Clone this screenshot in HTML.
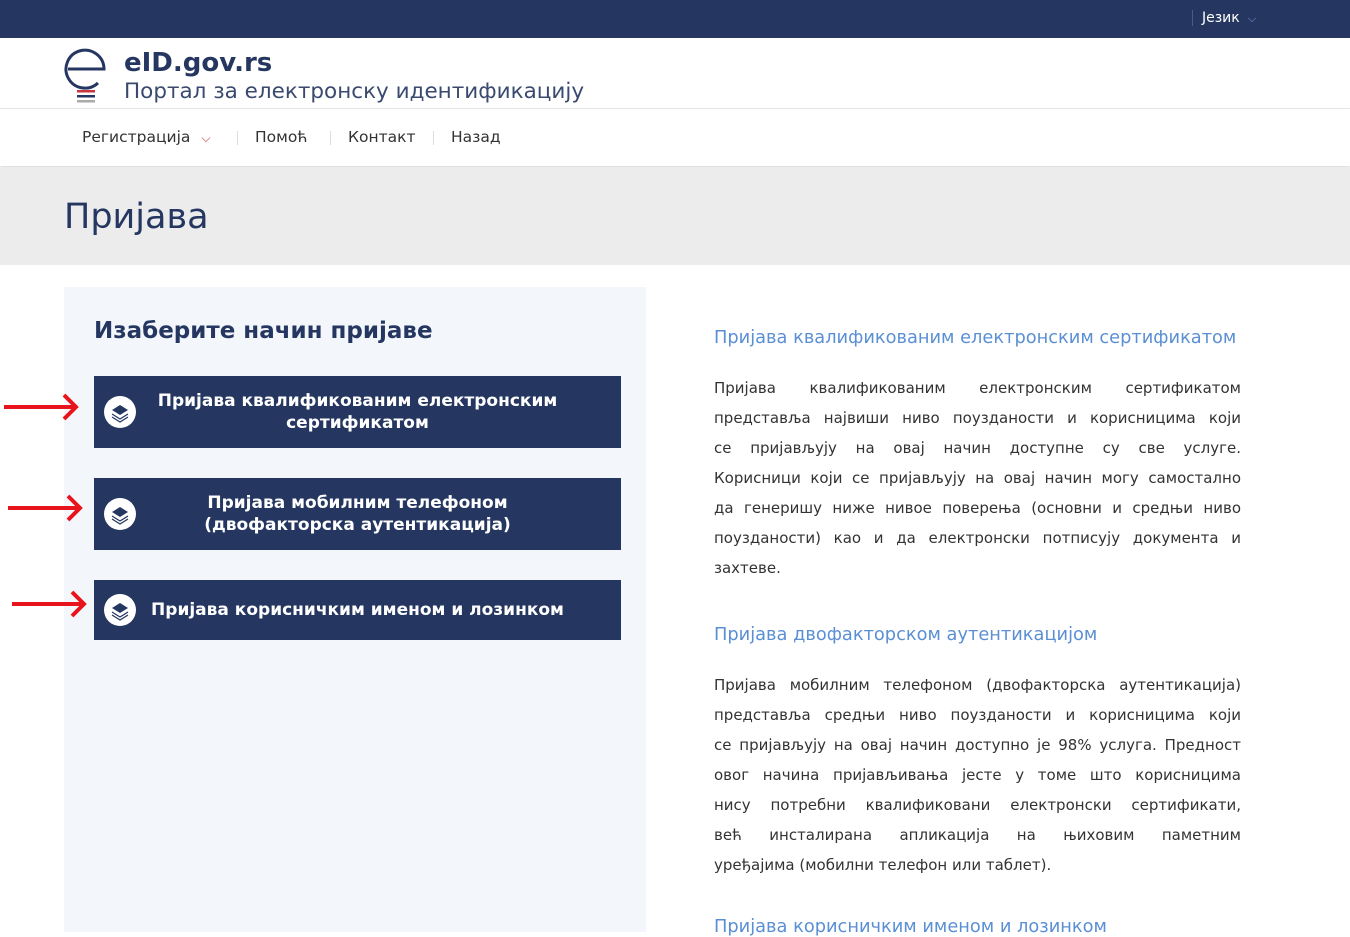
<!DOCTYPE html>
<html><head><meta charset="utf-8"><style>
body{margin:0;width:1350px;height:932px;overflow:hidden;background:#fff;font-family:"DejaVu Sans","Liberation Sans",sans-serif;color:#253761;position:relative}
.top{height:38px;background:#253761;position:relative}
.top span{position:absolute;left:1192px;top:10px;color:#fff;font-size:14px;border-left:1px solid #4a5b84;padding-left:9px}
.top span i{font-style:normal;color:#7f9be0;font-size:11px;margin-left:8px}
.hdr{height:70px;position:relative;border-bottom:1px solid #e6e6e6}
.t1{position:absolute;left:124px;font-size:26px;font-weight:bold}
.t2{position:absolute;left:124px;font-size:21.5px;color:#3a4a6e}
.nav{height:57px;position:relative;box-shadow:0 2px 3px rgba(0,0,0,.15);font-size:15.5px;color:#333}
.nav span{position:absolute;top:19px}
.sep{position:absolute;top:22px;width:1px;height:14px;background:#ddd}
.band{height:98px;background:#ececec;margin-top:1px;position:relative}
.left{position:absolute;left:64px;top:287px;width:582px;height:645px;background:#f3f7fc}
.left h2{position:absolute;left:30px;top:31px;margin:0;font-size:23px;font-weight:bold}
.btn{position:absolute;left:30px;width:527px;background:#253761;color:#fff;font-weight:bold;font-size:17px;text-align:center;display:flex;align-items:center;justify-content:center;line-height:22px}
.ic{position:absolute;left:10px;top:50%;margin-top:-16px;width:32px;height:32px;border-radius:50%;background:#fff}
.right{position:absolute;left:714px;width:527px}
.h{color:#5b8fd4;font-size:17.8px;position:absolute;left:0;white-space:nowrap}
.p{font-size:15px;line-height:30px;color:#333;position:absolute;left:0;width:527px}
.p div{text-align:justify;text-align-last:justify;white-space:nowrap}
.p div:last-child{text-align-last:left}
.arr{position:absolute}
</style></head><body>
<div class="top"><span>Језик<i>⌵</i></span></div>
<div class="hdr">
<svg style="position:absolute;left:64px;top:10px" width="46" height="58" viewBox="0 0 46 58"><path d="M4 21 H40 A19 19 0 1 0 34 35" fill="none" stroke="#253761" stroke-width="3"/><rect x="13" y="42" width="18" height="2.5" fill="#c6363c"/><rect x="13" y="47" width="18" height="2.5" fill="#253761"/><rect x="13" y="52" width="18" height="2.5" fill="#aaa"/></svg>
<div class="t1" style="top:10px">eID.gov.rs</div><div class="t2" style="top:41px">Портал за електронску идентификацију</div></div>
<div class="nav"><span style="left:82px">Регистрација <b style="color:#c6363c;font-weight:normal;margin-left:6px;font-size:12px">⌵</b></span><div class="sep" style="left:237px"></div><span style="left:255px">Помоћ</span><div class="sep" style="left:330px"></div><span style="left:348px">Контакт</span><div class="sep" style="left:433px"></div><span style="left:451px">Назад</span></div>
<div class="band"><h1 style="position:absolute;left:64px;top:30px;margin:0;font-size:35px;font-weight:normal">Пријава</h1></div>
<div class="left"><h2>Изаберите начин пријаве</h2>
<div class="btn" style="top:89px;height:72px"><div class="ic"><svg width="32" height="32"><path d="M8 14l8-5 8 5-8 5z" fill="#253761"/><path d="M8 18l8 5 8-5M8 21l8 5 8-5" fill="none" stroke="#253761" stroke-width="1.2"/></svg></div>Пријава квалификованим електронским<br>сертификатом</div>
<div class="btn" style="top:191px;height:72px"><div class="ic"><svg width="32" height="32"><path d="M8 14l8-5 8 5-8 5z" fill="#253761"/><path d="M8 18l8 5 8-5M8 21l8 5 8-5" fill="none" stroke="#253761" stroke-width="1.2"/></svg></div>Пријава мобилним телефоном<br>(двофакторска аутентикација)</div>
<div class="btn" style="top:293px;height:60px"><div class="ic"><svg width="32" height="32"><path d="M8 14l8-5 8 5-8 5z" fill="#253761"/><path d="M8 18l8 5 8-5M8 21l8 5 8-5" fill="none" stroke="#253761" stroke-width="1.2"/></svg></div>Пријава корисничким именом и лозинком</div>
</div>
<svg class="arr" style="left:0;top:390px" width="90" height="230"><g stroke="#e8141b" stroke-width="4" fill="none"><path d="M4 17H76M64 5l12 12-12 12"/><path d="M8 118H80M68 106l12 12-12 12"/><path d="M12 214H84M72 202l12 12-12 12"/></g></svg>
<div class="right" style="top:0">
<div class="h" style="top:327px">Пријава квалификованим електронским сертификатом</div>
<div class="p" style="top:373px"><div>Пријава квалификованим електронским сертификатом</div><div>представља највиши ниво поузданости и корисницима који</div><div>се пријављују на овај начин доступне су све услуге.</div><div>Корисници који се пријављују на овај начин могу самостално</div><div>да генеришу ниже нивое поверења (основни и средњи ниво</div><div>поузданости) као и да електронски потписују документа и</div><div>захтеве.</div></div>
<div class="h" style="top:624px">Пријава двофакторском аутентикацијом</div>
<div class="p" style="top:670px"><div>Пријава мобилним телефоном (двофакторска аутентикација)</div><div>представља средњи ниво поузданости и корисницима који</div><div>се пријављују на овај начин доступно је 98% услуга. Предност</div><div>овог начина пријављивања јесте у томе што корисницима</div><div>нису потребни квалификовани електронски сертификати,</div><div>већ инсталирана апликација на њиховим паметним</div><div>уређајима (мобилни телефон или таблет).</div></div>
<div class="h" style="top:916px">Пријава корисничким именом и лозинком</div></div>
</body></html>
